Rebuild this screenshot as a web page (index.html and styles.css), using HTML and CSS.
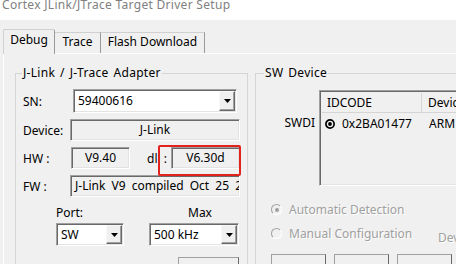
FILE: index.html
```html
<!DOCTYPE html>
<html lang="en">
<head>
    <meta charset="UTF-8">
    <title>Cortex JLink/JTrace Target Driver Setup</title>
    <link rel="stylesheet" href="styles.css">
</head>
<body>

    <div class="titlebar">Cortex JLink/JTrace Target Driver Setup</div>

    <div class="tabs">
        <div class="tab active">Debug</div>
        <div class="tab trace">Trace</div>
        <div class="tab flash">Flash Download</div>
    </div>

    <div class="page">
        <fieldset class="group adapter">
            <legend>J-Link / J-Trace Adapter</legend>

            <div class="rows">
                <label class="lbl">SN:</label>
                <div class="combo sn">
                    <span class="value">59400616</span>
                    <span class="drop"><svg width="7" height="4" viewBox="0 0 7 4"><path d="M0 0h7L3.5 4z"/></svg></span>
                </div>

                <label class="lbl">Device:</label>
                <div class="field center">J-Link</div>

                <label class="lbl">HW :</label>
                <div class="hw">
                    <div class="field center hw-ver">V9.40</div>
                    <span class="dll">dll :</span>
                    <div class="field center dll-ver">V6.30d</div>
                    <div class="highlight"></div>
                </div>

                <label class="lbl">FW :</label>
                <div class="field fw">J-Link V9 compiled Oct 25 2017 11:23:15</div>
            </div>

            <div class="speed">
                <span>Port:</span>
                <span class="max-lbl">Max</span>
                <div class="combo">
                    <span class="value">SW</span>
                    <span class="drop"><svg width="7" height="4" viewBox="0 0 7 4"><path d="M0 0h7L3.5 4z"/></svg></span>
                </div>
                <div class="combo">
                    <span class="value">500 kHz</span>
                    <span class="drop"><svg width="7" height="4" viewBox="0 0 7 4"><path d="M0 0h7L3.5 4z"/></svg></span>
                </div>
            </div>

            <div class="btns left-btns">
                <span class="btn"></span>
            </div>
        </fieldset>

        <fieldset class="group swdevice">
            <legend>SW Device</legend>

            <div class="sw-top">
                <span class="swd-lbl">SWDI</span>
                <div class="listview">
                    <div class="lv-head">
                        <span class="col1">IDCODE</span>
                        <span class="col2">Device Name</span>
                    </div>
                    <div class="lv-row">
                        <span class="col1">
                            <svg class="chip" width="10" height="10" viewBox="0 0 10 10"><circle cx="5" cy="5" r="4.1" fill="none" stroke="#000" stroke-width="1.7"/><circle cx="5" cy="5" r="1.9"/></svg>
                            0x2BA01477
                        </span>
                        <span class="col2">ARM CoreSight SW-DP</span>
                    </div>
                </div>
            </div>

            <div class="radios">
                <div class="radio-row">
                    <span class="radio checked"></span>
                    <span class="disabled">Automatic Detection</span>
                </div>
                <div class="radio-row">
                    <span class="radio"></span>
                    <span class="disabled manual">Manual Configuration</span>
                    <span class="disabled dev">Device Name</span>
                </div>
            </div>

            <div class="btns right-btns">
                <span class="btn"></span>
                <span class="btn"></span>
                <span class="btn"></span>
            </div>
        </fieldset>
    </div>

</body>
</html>
```

FILE: styles.css
```css
* {
    box-sizing: border-box;
}

body {
    margin: 0;
    width: 456px;
    height: 264px;
    overflow: hidden;
    background-color: #f0f0f0;
    font-family: "Noto Sans", sans-serif;
    font-size: 12px;
    color: #000;
}

.titlebar {
    height: 20px;
    padding-left: 2px;
    background-color: #fff;
    color: #7f7f7f;
    line-height: 10px;
    letter-spacing: 0.3px;
    white-space: nowrap;
}

/* tab strip */
.tabs {
    display: flex;
    align-items: flex-end;
    height: 33px;
    padding-left: 3px;
}

.tab {
    height: 21px;
    line-height: 18px;
    text-align: center;
    border: 1px solid #d0d0d0;
    border-right-color: #9a9a9a;
    border-bottom: none;
    background-color: #f0f0f0;
    white-space: nowrap;
}

.tab.active {
    position: relative;
    z-index: 1;
    width: 52px;
    height: 25px;
    margin-bottom: -1px;
    line-height: 20px;
    border-radius: 2px 2px 0 0;
}

.tab.trace {
    width: 46px;
    border-left: none;
}

.tab.flash {
    width: 104px;
    border-left: none;
}

.page {
    display: flex;
    gap: 7px;
    height: 211px;
    margin-left: 3px;
    padding: 11px 0 0 11px;
    border-top: 1px solid #fff;
    border-left: 1px solid #fff;
}

/* group boxes */
.group {
    margin: 0;
    height: 230px;
    min-width: 0;
    border: 1px solid #d5d5d5;
}

.group legend {
    padding: 0 1px;
    line-height: 16px;
    letter-spacing: 0.3px;
    word-spacing: 1.5px;
}

.adapter {
    flex: none;
    width: 233px;
    padding: 0 7px 0 6px;
}

.swdevice {
    flex: none;
    width: 220px;
    padding: 0 0 0 8px;
}

.rows {
    display: grid;
    grid-template-columns: 48px 170px;
    grid-template-rows: 24px 22px 22px 22px;
    row-gap: 6px;
    align-items: center;
    margin-top: 8px;
}

.lbl {
    padding-left: 1px;
    white-space: nowrap;
}

/* sunken controls */
.combo,
.field,
.listview {
    border: 1px solid;
    border-color: #a0a0a0 #fff #fff #a0a0a0;
    box-shadow: inset 1px 1px #696969, inset -1px -1px #e3e3e3;
}

.combo {
    display: flex;
    height: 100%;
    padding: 1px;
    background-color: #fff;
}

.combo.sn {
    margin: 0 3px;
}

.combo .value {
    flex: 1;
    padding-left: 3px;
    line-height: 20px;
    white-space: nowrap;
}

.drop {
    display: flex;
    flex: none;
    align-items: center;
    justify-content: center;
    width: 16px;
    background-color: #f0f0f0;
    border: 1px solid;
    border-color: #f8f8f8 #696969 #696969 #f8f8f8;
    box-shadow: inset -1px -1px #a0a0a0;
}

.field {
    height: 22px;
    line-height: 20px;
    background-color: #f0f0f0;
    white-space: nowrap;
    overflow: hidden;
}

.center {
    text-align: center;
}

.fw {
    padding-left: 4px;
    word-spacing: 3px;
}

.hw {
    position: relative;
    display: flex;
    align-items: center;
    height: 22px;
}

.hw-ver {
    width: 59px;
    margin-left: 1px;
}

.dll {
    margin-left: 17px;
    white-space: nowrap;
}

.dll-ver {
    width: 69px;
    margin-left: auto;
}

/* red marker drawn over the dll version */
.highlight {
    position: absolute;
    left: 88px;
    top: -2px;
    width: 83px;
    height: 31px;
    border: 2px solid #e2231d;
    border-radius: 2px;
}

.speed {
    display: grid;
    grid-template-columns: 68px 90px;
    grid-template-rows: 16px 23px;
    column-gap: 25px;
    row-gap: 2px;
    margin: 8px 0 0 34px;
    line-height: 16px;
}

.max-lbl {
    padding-left: 39px;
}

.btns {
    display: flex;
    margin-top: 11px;
}

.btn {
    display: block;
    flex: none;
    width: 55px;
    height: 22px;
    border: 1px solid #a0a0a0;
    border-right-color: #696969;
    background-color: #f0f0f0;
}

.left-btns {
    margin-left: 156px;
}

.left-btns .btn {
    width: 61px;
}

/* SW device */
.sw-top {
    display: flex;
    align-items: flex-start;
}

.swd-lbl {
    flex: none;
    width: 55px;
    margin-top: 34px;
    padding-right: 4px;
    text-align: right;
    line-height: 16px;
}

.listview {
    flex: 1;
    height: 96px;
    margin-top: 9px;
    padding: 2px 0 0 2px;
    background-color: #f0f0f0;
    white-space: nowrap;
    overflow: hidden;
}

.lv-head,
.lv-row {
    display: flex;
}

.lv-head {
    height: 20px;
    line-height: 19px;
    border-bottom: 1px solid #d5d5d5;
}

.col1 {
    display: flex;
    flex: none;
    align-items: center;
    width: 100px;
    padding-left: 5px;
}

.lv-head .col1 {
    border-right: 1px solid #d5d5d5;
}

.col2 {
    flex: none;
    padding-left: 6px;
}

.lv-row {
    height: 22px;
    line-height: 22px;
}

.lv-row .col1 {
    padding-left: 3px;
}

.lv-row .col2 {
    padding-left: 7px;
}

.chip {
    flex: none;
    margin-right: 7px;
}

.radios {
    margin: 16px 0 0 7px;
    line-height: 16px;
}

.radio-row {
    display: flex;
    align-items: flex-start;
    margin-bottom: 8px;
}

.radio {
    position: relative;
    flex: none;
    width: 11px;
    height: 11px;
    margin: 2px 7px 0 0;
    border-radius: 50%;
    border: 1px solid;
    border-color: #a0a0a0 #fff #fff #a0a0a0;
    background-color: #f0f0f0;
}

.radio.checked::after {
    content: "";
    position: absolute;
    left: 2.5px;
    top: 2.5px;
    width: 4px;
    height: 4px;
    border-radius: 50%;
    background-color: #a0a0a0;
}

.disabled {
    flex: none;
    color: #a0a0a0;
    text-shadow: 1px 1px #fff;
    white-space: nowrap;
}

.manual {
    width: 149px;
}

.dev {
    padding-top: 4px;
}

.right-btns {
    gap: 8px;
    margin: 3px 0 0 7px;
}
```
